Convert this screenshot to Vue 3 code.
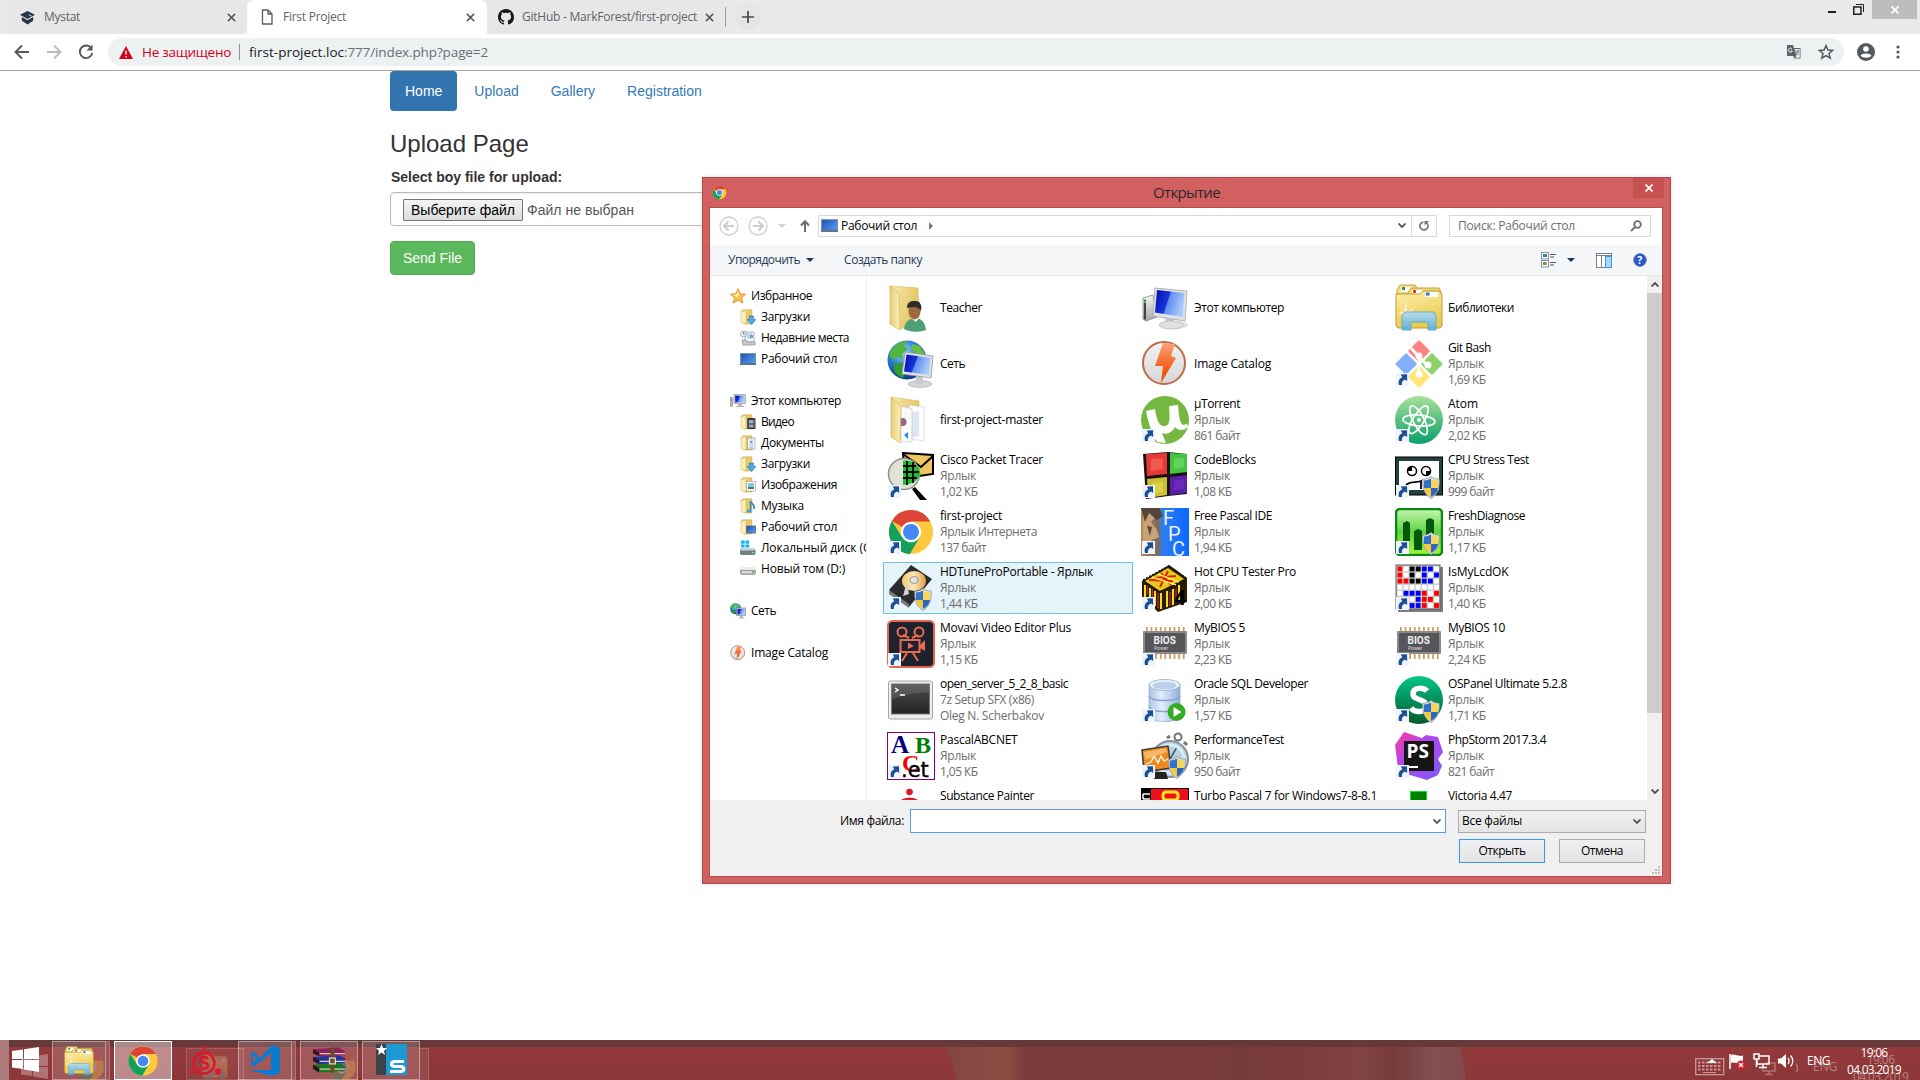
<script setup>
const fit = (el, width) => {
  const natural = el.getBoundingClientRect().width
  const count = el.textContent.trim().length
  el.style.letterSpacing = `${(width - natural) / count}px`
}
const vFit = {
  mounted(el, { value }) {
    if (value) fit(el, value)
  },
}

const places = [
  { t: 'Избранное', i: 's-star', w: 61, root: true },
  { t: 'Загрузки', i: 's-down', w: 49 },
  { t: 'Недавние места', i: 's-recent', w: 88 },
  { t: 'Рабочий стол', i: 's-desk', w: 76 },
  { gap: true },
  { t: 'Этот компьютер', i: 's-pc', w: 90, root: true },
  { t: 'Видео', i: 's-video', w: 33 },
  { t: 'Документы', i: 's-docs', w: 63 },
  { t: 'Загрузки', i: 's-down', w: 49 },
  { t: 'Изображения', i: 's-pics', w: 76 },
  { t: 'Музыка', i: 's-music', w: 43 },
  { t: 'Рабочий стол', i: 's-fdesk', w: 76 },
  { t: 'Локальный диск (C:)', i: 's-diskc', w: 116 },
  { t: 'Новый том (D:)', i: 's-disk', w: 84 },
  { gap: true },
  { t: 'Сеть', i: 's-net', w: 25, root: true },
  { gap: true },
  { t: 'Image Catalog', i: 'catalog', w: 77, root: true },
]

const L = ['Ярлык', 36]
const files = [
  { n: 'Teacher', w: 42, i: 'teacher' },
  { n: 'Этот компьютер', w: 90, i: 'pc' },
  { n: 'Библиотеки', w: 66, i: 'libs' },
  { n: 'Сеть', w: 25, i: 'net' },
  { n: 'Image Catalog', w: 77, i: 'catalog' },
  { n: 'Git Bash', w: 43, i: 'git', s: 1, d: [L, ['1,69 КБ', 37.5]] },
  { n: 'first-project-master', w: 103, i: 'fpm' },
  { n: 'µTorrent', w: 46, i: 'utorrent', s: 1, d: [L, ['861 байт', 46]] },
  { n: 'Atom', w: 30, i: 'atom', s: 1, d: [L, ['2,02 КБ', 37.5]] },
  { n: 'Cisco Packet Tracer', w: 103, i: 'cisco', s: 1, d: [L, ['1,02 КБ', 37.5]] },
  { n: 'CodeBlocks', w: 62, i: 'blocks', s: 1, d: [L, ['1,08 КБ', 37.5]] },
  { n: 'CPU Stress Test', w: 81, i: 'stress', s: 1, a: 1, d: [L, ['999 байт', 46]] },
  { n: 'first-project', w: 62, i: 'chrome', s: 1, d: [['Ярлык Интернета', 97], ['137 байт', 46]] },
  { n: 'Free Pascal IDE', w: 78, i: 'fpc', s: 1, d: [L, ['1,94 КБ', 37.5]] },
  { n: 'FreshDiagnose', w: 77, i: 'fresh', s: 1, a: 1, d: [L, ['1,17 КБ', 37.5]] },
  { n: 'HDTuneProPortable - Ярлык', w: 153, i: 'hdtune', s: 1, a: 1, hover: true, d: [L, ['1,44 КБ', 37.5]] },
  { n: 'Hot CPU Tester Pro', w: 102, i: 'hotcpu', s: 1, d: [L, ['2,00 КБ', 37.5]] },
  { n: 'IsMyLcdOK', w: 60.5, i: 'lcd', s: 1, d: [L, ['1,40 КБ', 37.5]] },
  { n: 'Movavi Video Editor Plus', w: 131, i: 'movavi', s: 1, d: [L, ['1,15 КБ', 37.5]] },
  { n: 'MyBIOS 5', w: 51, i: 'bios', s: 1, d: [L, ['2,23 КБ', 37.5]] },
  { n: 'MyBIOS 10', w: 57, i: 'bios', s: 1, d: [L, ['2,24 КБ', 37.5]] },
  { n: 'open_server_5_2_8_basic', w: 128, i: 'term', d: [['7z Setup SFX (x86)', 94], ['Oleg N. Scherbakov', 104]] },
  { n: 'Oracle SQL Developer', w: 114, i: 'oracle', s: 1, d: [L, ['1,57 КБ', 37.5]] },
  { n: 'OSPanel Ultimate 5.2.8', w: 119, i: 'ospanel', s: 1, a: 1, d: [L, ['1,71 КБ', 37.5]] },
  { n: 'PascalABCNET', w: 77.5, i: 'pascal', s: 1, d: [L, ['1,05 КБ', 37.5]] },
  { n: 'PerformanceTest', w: 90, i: 'perf', s: 1, a: 1, d: [L, ['950 байт', 46]] },
  { n: 'PhpStorm 2017.3.4', w: 98, i: 'storm', s: 1, d: [L, ['821 байт', 46]] },
  { n: 'Substance Painter', w: 94, i: 'substance', tall: true },
  { n: 'Turbo Pascal 7 for Windows7-8-8.1', w: 183, i: 'turbo', tall: true },
  { n: 'Victoria 4.47', w: 64, i: 'victoria', tall: true },
]

// Lettering drawn over the tile artwork: text, x, baseline, size, colour, family class
const lettering = {
  fpc: [['F', 22, 17, 20, '#e8f2ff', 'sans'], ['P', 27, 33, 20, '#e8f2ff', 'sans'], ['C', 31, 48, 20, '#e8f2ff', 'sans']],
  hotcpu: [['4', 33, 41, 21, '#000', 'bold']],
  bios: [['BIOS', 12.5, 24, 10, '#f0f0f0', 'bold'], ['Power', 13, 30, 5, '#ddd', 'sans']],
  storm: [['PS', 11.5, 26, 19, '#fff', 'open']],
  pascal: [['A', 4, 21, 25, '#000080', 'serif'], ['B', 28, 21, 24, '#008000', 'serif'], ['C', 15, 39, 24, '#f00', 'serif'], ['.et', 14, 45, 21, '#000', 'deja']],
}

const lcdRows = ['r.kkbb.', 'r.k.b.b', 'rrkkbb.', '.......', '.bbbr.r', '...brr.', '..bbr.r']
const lcdColor = { r: '#f00', k: '#000', b: '#00f', '.': '#fff' }
const pins = [0, 1, 2, 3, 4, 5, 6, 7, 8]
</script>

<template>
  <div class="screen">
    <svg class="sprite" width="0" height="0" aria-hidden="true">
      <defs>
        <linearGradient id="gFold" x1="0" x2="1" y2="0.4"><stop offset="0" stop-color="#f9ebae" /><stop offset="1" stop-color="#e2c35f" /></linearGradient>
        <linearGradient id="gFlap" x1="0" x2="1"><stop offset="0" stop-color="#e7cd78" /><stop offset="1" stop-color="#fcf2bd" /></linearGradient>
        <linearGradient id="gBlue" x1="0" x2="1" y2="0.3"><stop offset="0" stop-color="#0a0ab4" /><stop offset="0.5" stop-color="#1638d8" /><stop offset="0.52" stop-color="#5f8cf0" /><stop offset="1" stop-color="#a9c9fb" /></linearGradient>
        <linearGradient id="gDesk" x1="0" x2="1" y2="1"><stop offset="0" stop-color="#1c4fb4" /><stop offset="1" stop-color="#5ea3f5" /></linearGradient>
        <linearGradient id="gMetal" x2="0" y2="1"><stop offset="0" stop-color="#f4f4f4" /><stop offset="1" stop-color="#a5a8aa" /></linearGradient>
        <radialGradient id="gGlobe" cx="0.4" cy="0.3" r="0.7"><stop offset="0" stop-color="#9fd9ff" /><stop offset="0.5" stop-color="#2d7fd0" /><stop offset="1" stop-color="#0b3b86" /></radialGradient>
        <linearGradient id="gBolt" x2="0" y2="1"><stop offset="0" stop-color="#f9a378" /><stop offset="0.6" stop-color="#f4601c" /><stop offset="1" stop-color="#ee4b00" /></linearGradient>
        <linearGradient id="gAtom" x2="0" y2="1"><stop offset="0" stop-color="#a9e09b" /><stop offset="1" stop-color="#0aa06a" /></linearGradient>
        <linearGradient id="gOs" x2="0" y2="1"><stop offset="0" stop-color="#05c68a" /><stop offset="1" stop-color="#055a2b" /></linearGradient>
        <linearGradient id="gDb" x1="0" x2="1"><stop offset="0" stop-color="#a9c4e4" /><stop offset="0.4" stop-color="#e3eefb" /><stop offset="1" stop-color="#8fb0d8" /></linearGradient>
        <linearGradient id="gStorm" x1="0" x2="1" y2="1"><stop offset="0" stop-color="#ff3c93" /><stop offset="0.4" stop-color="#b345f1" /><stop offset="1" stop-color="#7b5cf5" /></linearGradient>
        <linearGradient id="gFresh" x2="0" y2="1"><stop offset="0" stop-color="#c6f5b4" /><stop offset="0.5" stop-color="#5ed43e" /><stop offset="1" stop-color="#a6f53c" /></linearGradient>
        <linearGradient id="gLibf" x2="0.3" y2="1"><stop offset="0" stop-color="#fff0ab" /><stop offset="1" stop-color="#e9c94f" /></linearGradient>
        <linearGradient id="gLibb" x2="0" y2="1"><stop offset="0" stop-color="#b5dcef" /><stop offset="1" stop-color="#55ade0" /></linearGradient>
        <linearGradient id="gTerm" x2="0" y2="1"><stop offset="0" stop-color="#4c4c4c" /><stop offset="1" stop-color="#242424" /></linearGradient>
        <linearGradient id="gGold" x1="0" x2="1"><stop offset="0" stop-color="#f5c96c" /><stop offset="0.5" stop-color="#fbe7b6" /><stop offset="1" stop-color="#e59b47" /></linearGradient>
        <linearGradient id="gFpc" x1="0" x2="1"><stop offset="0" stop-color="#b98a52" /><stop offset="0.35" stop-color="#7f6a58" /><stop offset="0.45" stop-color="#2d7ef2" /><stop offset="1" stop-color="#0a68ff" /></linearGradient>
      </defs>

      <symbol id="link" viewBox="0 0 13 13">
        <rect width="13" height="13" fill="#eef4fb" />
        <path d="M3 12C2 8 3.400 5 6.400 4.400L4.800 1.600 11 1.200 11.200 8 9 6.400C6.400 7.400 5.400 9.400 6 12Z" fill="#1c4e94" />
      </symbol>
      <symbol id="shield" viewBox="0 0 18 23">
        <path d="M9 .5C6.500 2.600 3.500 3.200.8 3.200.3 12 2.500 18.500 9 22.500 15.500 18.500 17.700 12 17.200 3.200 14.500 3.200 11.500 2.600 9 .5Z" fill="#dfe2e4" stroke="#8d9396" stroke-width=".8" />
        <path d="M9 2.500V12H2C1.800 9 1.800 6 2 4.500 4.500 4.400 7 3.800 9 2.500Z" fill="#2f72cc" />
        <path d="M9 2.500V12H16C16.200 9 16.200 6 16 4.500 13.500 4.400 11 3.800 9 2.500Z" fill="#f6d65a" />
        <path d="M9 21V12H2C2.800 16 5 19 9 21Z" fill="#f5c83c" />
        <path d="M9 21V12H16C15.200 16 13 19 9 21Z" fill="#2a67bd" />
      </symbol>
      <symbol id="chrome" viewBox="0 0 48 48">
        <circle cx="24" cy="24" r="22" fill="#fdc93a" />
        <path d="M24 24 4.900 13A22 22 0 0 1 43.200 13.500H24Z" fill="#db4437" />
        <path d="M4.950 13A22 22 0 0 0 22.800 46L33 29 24 24 15 29Z" fill="#12a05c" />
        <circle cx="24" cy="24" r="10.300" fill="#fff" />
        <circle cx="24" cy="24" r="8" fill="#4688f1" />
      </symbol>
      <symbol id="globe" viewBox="0 0 40 40">
        <circle cx="20" cy="20" r="19.500" fill="url(#gGlobe)" />
        <path d="M5 9C9 4 14 1 20 1L17 6 21 9 15 14 16 19 10 17 6 20 2 15Z" fill="#4fb53c" />
        <path d="M8 23 16 23 20 29 16 38C10 36 7 32 7 28Z" fill="#2f9c2f" />
        <path d="M25 4 33 6 38 14 35 18 28 13 24 9Z" fill="#67bd45" />
      </symbol>
      <symbol id="teacher" viewBox="0 0 48 48">
        <path d="M3 2 31 4 32 40 12 45Z" fill="url(#gFold)" stroke="#d6b95e" stroke-width=".6" />
        <path d="M3 2 12 10 13 46 3 40Z" fill="url(#gFlap)" stroke="#cfae4e" stroke-width=".6" />
        <path d="M17 45C18 37 22 35 28 34 34 34 38 38 39 46 31 49 23 48 17 45Z" fill="#4f9f77" />
        <path d="M24 34 29 38 32 34Z" fill="#fff" />
        <ellipse cx="27.500" cy="27" rx="6" ry="8.500" fill="#9c6a3e" />
        <path d="M20 24C20 17 25 17 28 17 34 17 35 22 34 27 32 23 27 22 20 24Z" fill="#2e2c2a" />
      </symbol>
      <symbol id="fpm" viewBox="0 0 48 48">
        <path d="M4 1 32 5V40L14 44Z" fill="url(#gFold)" stroke="#d6b95e" stroke-width=".6" />
        <path d="M22 9 37 11V45L22 43Z" fill="#fdfdfd" stroke="#c9c9c9" stroke-width=".6" />
        <path d="M24 16 32 15V40L24 42Z" fill="#dfe6f1" />
        <path d="M14 10 25 13V46L14 46Z" fill="#fafafa" stroke="#c2c2c2" stroke-width=".6" />
        <circle cx="15.500" cy="26" r="4" fill="#92648f" /><path d="M17 39 21 36V43Z" fill="#2093de" />
        <path d="M4 1 14 11 13 47 4 41Z" fill="url(#gFlap)" stroke="#cfae4e" stroke-width=".6" />
      </symbol>
      <symbol id="pc" viewBox="0 0 48 48">
        <ellipse cx="34" cy="41" rx="13" ry="4" fill="#d5d5d5" opacity=".7" />
        <path d="M2 14 12 11 16 33 5 37 2 35Z" fill="url(#gMetal)" stroke="#777" stroke-width=".7" />
        <path d="M3 16 5 15.500V36L3 35Z" fill="#444" /><circle cx="4" cy="18" r="1" fill="#3f3" />
        <path d="M24 34 33 35 33 41H25Z" fill="#c8cbcd" /><ellipse cx="30" cy="41" rx="12" ry="4" fill="#dee0e2" stroke="#b0b3b5" stroke-width=".6" />
        <path d="M14 4 46 7 44 37 12 32Z" fill="#e0e2e4" stroke="#a1a4a6" stroke-width=".8" />
        <path d="M16 6 43.500 9 41.500 33 14 28.500Z" fill="url(#gBlue)" />
      </symbol>
      <symbol id="net" viewBox="0 0 48 48">
        <use href="#globe" x="0" y="0" width="40" height="40" />
        <ellipse cx="33" cy="44" rx="12" ry="3.500" fill="#d3d6d8" stroke="#a9acae" stroke-width=".6" />
        <path d="M29 36h7v8h-7z" fill="#c8cbcd" />
        <path d="M18 12 46 16 44 38 15 34Z" fill="#e0e2e4" stroke="#94989b" stroke-width=".8" />
        <path d="M19.500 14.500 43.500 18 42 35 17 31.500Z" fill="url(#gBlue)" />
      </symbol>
      <symbol id="catalog" viewBox="0 0 48 48">
        <circle cx="23" cy="23" r="21.500" fill="url(#gMetal)" /><circle cx="23" cy="23" r="21.500" fill="#f3f3f3" opacity=".6" />
        <circle cx="23" cy="23" r="21" fill="none" stroke="#bd6a45" stroke-width="2" />
        <path d="M22 3 34 4 30 16 35 18 20 43 22 26 14 26Z" fill="url(#gBolt)" />
      </symbol>
      <symbol id="libs" viewBox="0 0 48 48">
        <path d="M2 6 5 1H20L22 4V10H2Z" fill="#f2dd8b" stroke="#c6a33c" /><rect x="6" y="3" width="10" height="5" fill="#fff" /><rect x="7" y="3" width="3" height="3" fill="#2b9c3f" />
        <path d="M13 8 16 4H44L46 8V14H13Z" fill="#eed57d" stroke="#c6a33c" /><rect x="17" y="6" width="11" height="5" fill="#fff" /><rect x="18" y="6" width="3" height="3" fill="#e23c1c" />
        <path d="M1 10H25L28 7H44L47 11V42L45 44H3L1 42Z" fill="url(#gLibf)" stroke="#c09c35" />
        <rect x="30" y="8" width="13" height="5" fill="#fff" /><rect x="31" y="8.500" width="3.500" height="3" fill="#2876c9" />
        <path d="M11 14 12 28 22 22 13 30 22 36 12 33 7 42 9 31 2 28 9 28Z" fill="#fff" opacity=".6" />
        <path d="M10 28H39L41 32V46H33V38H16V46H7V32Z" fill="url(#gLibb)" stroke="#5ba7ce" opacity=".92" />
      </symbol>
      <symbol id="git" viewBox="0 0 48 48">
        <g transform="rotate(45 24 24)">
          <rect x="7" y="7" width="15.800" height="15.800" rx="1.500" fill="#ff8181" /><rect x="25.200" y="7" width="15.800" height="15.800" rx="1.500" fill="#8bd367" />
          <rect x="7" y="25.200" width="15.800" height="15.800" rx="1.500" fill="#82aefc" /><rect x="25.200" y="25.200" width="15.800" height="15.800" rx="1.500" fill="#ffe675" />
        </g>
        <path d="M16 8 24 17V34M24 17 32 25" fill="none" stroke="#fff" stroke-width="3" /><circle cx="24" cy="16" r="3.500" fill="#fff" /><circle cx="24" cy="34" r="3.500" fill="#fff" /><circle cx="33" cy="25" r="3.500" fill="#fff" />
      </symbol>
      <symbol id="utorrent" viewBox="0 0 48 48">
        <circle cx="24" cy="24" r="24" fill="#76b83f" />
        <path d="M5 15 14 13C16 26 19 31 24 30 29 29 29 24 28 10L37 9C38 22 39 27 42 29L46 28 47 31C43 35 37 35 34 31 31 37 25 39 21 37L25 47 16 46C10 36 7 25 5 15Z" fill="#fff" />
      </symbol>
      <symbol id="atom" viewBox="0 0 48 48">
        <circle cx="24" cy="24" r="24" fill="url(#gAtom)" />
        <g fill="none" stroke="#fff" stroke-width="1.700"><ellipse cx="24" cy="24.500" rx="16" ry="5.500" transform="rotate(5 24 24)" /><ellipse cx="24" cy="24.500" rx="16" ry="5.500" transform="rotate(63 24 24)" /><ellipse cx="24" cy="24.500" rx="16" ry="5.500" transform="rotate(122 24 24)" /></g><circle cx="24" cy="24" r="2" fill="#fff" />
      </symbol>
      <symbol id="cisco" viewBox="0 0 48 48">
        <path d="M16 1 46 3 46 22 18 26Z" fill="#edc561" stroke="#000" stroke-width="2" /><path d="M16 2 34 15 46 4" fill="none" stroke="#000" stroke-width="2" />
        <circle cx="17" cy="22" r="15.500" fill="#e1e1da" stroke="#8f8f8c" stroke-width="1.500" />
        <path d="M16 9C24 7 32 13 33 22 32 28 26 32 16 33Z" fill="#18c32c" /><path d="M16 14H29M16 20H32M16 26H30M20 9V33M26 10V31" stroke="#000" stroke-width="1.800" />
        <path d="M25 37 28 35 40 48H33Z" fill="#000" />
      </symbol>
      <symbol id="blocks" viewBox="0 0 48 48">
        <path d="M2 2 27 0 46 2V42L27 44 5 47Z" fill="#1b1016" />
        <path d="M5 2 26 1V22L6 24Z" fill="#e03a32" /><path d="M10 7 22 6V17L10 19Z" fill="#f05a50" /><path d="M29 1 46 2V20L29 22Z" fill="#43c341" /><path d="M33 6 43 6V15L33 17Z" fill="#60d458" />
        <path d="M6 27 26 25V43L7 46Z" fill="#c9bf33" /><path d="M11 31 22 30V40L11 42Z" fill="#dcd044" /><path d="M29 25 46 23V41L29 43Z" fill="#5a20a6" /><path d="M33 29 43 27V37L33 38Z" fill="#6a2cb8" />
      </symbol>
      <symbol id="stress" viewBox="0 0 48 48">
        <rect x=".5" y="5" width="47" height="38" fill="#23413f" stroke="#000" /><rect x="4" y="9" width="40" height="29" fill="#fff" />
        <circle cx="17" cy="19" r="4.500" fill="#fff" stroke="#000" stroke-width="1.500" /><path d="M17 14A5 5 0 0 0 12 19H17Z" /><circle cx="31" cy="19" r="4.500" fill="#fff" stroke="#000" stroke-width="1.500" /><path d="M31 19V24A5 5 0 0 0 36 19Z" />
        <path d="M11 33C15 29 20 31 26 29V37" fill="none" stroke="#000" stroke-width="1.800" />
      </symbol>
      <symbol id="fpc" viewBox="0 0 48 48">
        <rect width="48" height="48" fill="url(#gFpc)" />
        <path d="M2 6 10 2 15 8 10 14 16 22 18 29 11 32 10 40 2 42Z" fill="#c9a378" /><path d="M0 0 18 0 22 8 16 12 8 5 4 14Z" fill="#54443a" /><path d="M6 18 11 19 9 28Z" fill="#5d4636" />
      </symbol>
      <symbol id="fresh" viewBox="0 0 48 48">
        <rect x="1" y="1" width="46" height="46" rx="4" fill="url(#gFresh)" stroke="#088c12" stroke-width="2.500" />
        <path d="M8 15 12 13 15 15V33H8ZM19 23 23 21 27 23V42H19ZM31 12 35 10 39 12V30H31Z" fill="#04580a" />
      </symbol>
      <symbol id="hdtune" viewBox="0 0 48 48">
        <path d="M24 1 45 15 22 43 2 26Z" fill="#2b2b2d" /><path d="M2 26 22 40V44L2 30Z" fill="#77787a" />
        <ellipse cx="27" cy="17" rx="12" ry="10" fill="url(#gGold)" /><ellipse cx="27" cy="16" rx="4" ry="3.500" fill="#e4e4e4" stroke="#999" /><path d="M20 17 22 30 16 32Z" fill="#d3d3d3" />
      </symbol>
      <symbol id="hotcpu" viewBox="0 0 48 48">
        <path d="M1 17 28 1 46 14V38L17 48 1 33Z" fill="#2c1c05" />
        <path d="M4 17 27 4 43 15 19 27Z" fill="#e8c91c" /><path d="M8 16 32 17M13 14 35 12M20 9 30 21M27 7 19 23" stroke="#e01f10" stroke-width="2" /><path d="M11 13 35 21M17 10 38 18" stroke="#fff14c" stroke-width="1.500" />
        <g fill="none"><path d="M2 16 28 2 45 14M2 17 18 28 45 17" stroke="#1a1204" stroke-width="1.500" stroke-dasharray="2 1.500" /></g>
        <path d="M4 21V33M9 24V37M14 27V42M20 29V45M26 27V43M32 25V41M38 21V38" stroke="#f2e01e" stroke-width="2" /><path d="M6.500 22V30M11.500 25V36M17 29V44M29 28V42M35 25V38" stroke="#d6261b" stroke-width="1.200" />
      </symbol>
      <symbol id="lcd" viewBox="0 0 48 48">
        <rect x="3" y="3" width="45" height="45" fill="#7c7c7c" /><rect x="1" y="1" width="44" height="44" fill="#c9c9c9" stroke="#5d5d5d" />
        <g v-for="(row, y) in lcdRows" :key="y"><rect v-for="(c, x) in row" :key="x" :x="2.5 + x * 6.1" :y="2.5 + y * 6.1" width="4.800" height="4.800" :fill="lcdColor[c]" /></g>
      </symbol>
      <symbol id="movavi" viewBox="0 0 48 48">
        <rect x="1" y="1" width="46" height="46" rx="4.500" fill="#1d222e" stroke="#e5654f" stroke-width="2" />
        <g fill="none" stroke="#ea6a52" stroke-width="2"><circle cx="15" cy="12" r="4.500" /><circle cx="32" cy="12" r="4.500" /><path d="M13.500 20H32.500V32H13.500ZM22 18 16 15M25 18 31 15M20 33 15 41M26 33 31 41" /></g><path d="M33 25 38 20V31L33 28ZM21 22.500 27 26 21 29Z" fill="#ea6a52" />
      </symbol>
      <symbol id="bios" viewBox="0 0 48 48">
        <g fill="#cf9f62"><g v-for="p in pins" :key="p"><rect :x="5 + p * 4.6" y="7" width="1.800" height="6" /><rect :x="5 + p * 4.6" y="33" width="1.800" height="6" /></g></g>
        <rect x="2" y="11" width="44" height="23" rx="1" fill="#8a8a8a" /><rect x="4" y="13" width="40" height="19" fill="#55565a" />
      </symbol>
      <symbol id="term" viewBox="0 0 48 48">
        <rect x="1.500" y="5" width="44" height="38" rx="2" fill="#ededed" stroke="#a6a6a6" /><rect x="4.500" y="8" width="38" height="30" fill="url(#gTerm)" stroke="#777" /><path d="M5 9H42V16C28 17 16 19 5 23Z" fill="#fff" opacity=".12" />
        <path d="M8 12 11 14 8 16M13 19H18" fill="none" stroke="#fff" stroke-width="1.400" />
      </symbol>
      <symbol id="oracle" viewBox="0 0 48 48">
        <path d="M8 8V41C8 47 39 47 39 41V8Z" fill="url(#gDb)" stroke="#8ba9d0" stroke-width=".7" /><path d="M8 20C10 26 37 26 39 20M8 31C10 37 37 37 39 31" fill="none" stroke="#86a5cf" stroke-width="1.500" /><ellipse cx="23.500" cy="9" rx="15.500" ry="5.500" fill="#edf4fc" stroke="#9db9dc" /><ellipse cx="23.500" cy="9.500" rx="12" ry="3.800" fill="#b9cfea" />
        <circle cx="35.500" cy="36" r="9" fill="#33ab22" /><path d="M32.500 31 40.500 36 32.500 41Z" fill="#fff" />
      </symbol>
      <symbol id="ospanel" viewBox="0 0 48 48">
        <circle cx="24" cy="24" r="24" fill="url(#gOs)" /><path d="M32 15C29 11.500 18 10.500 18 18 18 25 31 22 31 30 31 37 20 37 16 32" fill="none" stroke="#fff" stroke-width="5.500" />
      </symbol>
      <symbol id="pascal" viewBox="0 0 48 48"><rect x=".5" y=".5" width="47" height="47" fill="#fff" stroke="#800080" /></symbol>
      <symbol id="perf" viewBox="0 0 48 48">
        <circle cx="37" cy="5" r="3.500" fill="none" stroke="#70787c" stroke-width="2" /><path d="M26 6 29 4M43 10 46 13" stroke="#70787c" stroke-width="3" />
        <circle cx="29" cy="27" r="18" fill="#b7d3e6" stroke="#8a9297" stroke-width="2" /><path d="M29 27 36 15" stroke="#456" stroke-width="1.500" /><circle cx="29" cy="27" r="14" fill="none" stroke="#dcecf6" stroke-width="3" />
        <path d="M1 18 27 14 30 36 3 40Z" fill="#f08a1d" stroke="#3a3a3a" stroke-width="1.500" /><path d="M5 32 10 30 13 24 17 31 20 24 23 29 27 27" fill="none" stroke="#fff" stroke-width="1.300" /><path d="M3 20 25 16 26 20 4 28Z" fill="#fbc078" opacity=".8" />
        <path d="M14 40H25L27 47H13Z" fill="#222" />
      </symbol>
      <symbol id="storm" viewBox="0 0 48 48">
        <path d="M9 0 27 6 31 3 43 5 48 20 43 27 47 34 43 43 32 48 15 43 3 36 0 13Z" fill="url(#gStorm)" /><rect x="9" y="9" width="30" height="30" fill="#151515" /><rect x="12" y="34" width="11" height="2" fill="#fff" />
      </symbol>
      <symbol id="substance" viewBox="0 0 48 48">
        <circle cx="22.500" cy="4" r="3.300" fill="#dc1a2c" /><circle cx="22.500" cy="26" r="14" fill="none" stroke="#dc1a2c" stroke-width="5" />
      </symbol>
      <symbol id="turbo" viewBox="0 0 48 48">
        <rect width="48" height="48" fill="#000" /><rect x="10" y="1" width="37" height="47" fill="#f00f1a" /><rect x="22" y="4" width="15" height="8" rx="3" fill="none" stroke="#ffe81c" stroke-width="3" />
        <path d="M2 6H9M2 11H9M2 6V11" stroke="#fff" stroke-width="1.500" fill="none" /><path d="M13 3v9M17 5v6M43 3v9M40 5v5" stroke="#a0132c" stroke-dasharray="1 2" />
      </symbol>
      <symbol id="victoria" viewBox="0 0 48 48"><rect x="15.500" y="3.500" width="16" height="30" fill="#007e00" stroke="#00ed10" /></symbol>

      <symbol id="s-folder" viewBox="0 0 16 16"><path d="M1 2.500 3 .8H12V15H4Z" fill="#e7c969" stroke="#c9a94a" stroke-width=".5" /><path d="M1 2.500 6 1.500V15L1 13.500Z" fill="#fbefb8" stroke="#d0b45c" stroke-width=".5" /></symbol>
      <symbol id="s-down" viewBox="0 0 16 16"><use href="#s-folder" width="16" height="16" /><path d="M9.500 7H13.500V10.500H16L11.500 15.500 7 10.500H9.500Z" fill="#49a9e6" stroke="#1e72b5" stroke-width=".6" /></symbol>
      <symbol id="s-video" viewBox="0 0 16 16"><use href="#s-folder" width="16" height="16" /><rect x="7" y="4" width="8.500" height="11" fill="#333" /><path d="M9 6h4.500v3.500H9zM9 10.500h4.500v3H9z" fill="#8fb5d6" /><path d="M7.800 4.500V15M14.800 4.500V15" stroke="#ddd" stroke-width=".7" stroke-dasharray="1 1" /></symbol>
      <symbol id="s-docs" viewBox="0 0 16 16"><use href="#s-folder" width="16" height="16" /><rect x="7.500" y="3" width="7.500" height="11" fill="#fff" stroke="#888" stroke-width=".6" /><path d="M9 5h4.500M9 9h4.500M9 11h4.500M9 12.800h4.500" stroke="#8c9eb2" stroke-width=".7" /><rect x="10" y="6" width="2.500" height="2" fill="#5aa4df" /></symbol>
      <symbol id="s-pics" viewBox="0 0 16 16"><use href="#s-folder" width="16" height="16" /><rect x="6.500" y="4.500" width="9" height="9.500" fill="#fff" stroke="#999" stroke-width=".6" /><path d="M8 6h6v6H8z" fill="#8fc3e4" /><path d="M8 10h6v2H8z" fill="#4d7d58" /></symbol>
      <symbol id="s-music" viewBox="0 0 16 16"><use href="#s-folder" width="16" height="16" /><path d="M10.500 3C11 6 15.500 6 14 11" fill="none" stroke="#2b87cb" stroke-width="1.500" /><path d="M10.500 3V13" stroke="#2b87cb" stroke-width="1.500" /><ellipse cx="9" cy="13" rx="2.500" ry="1.800" fill="#46a4e4" /></symbol>
      <symbol id="s-desk" viewBox="0 0 16 16"><rect x=".5" y="2.500" width="15" height="11" fill="url(#gDesk)" stroke="#7d93a8" /><path d="M0 12h16v2H0z" fill="#5e7288" /></symbol>
      <symbol id="s-fdesk" viewBox="0 0 16 16"><use href="#s-folder" width="16" height="16" /><rect x="6.500" y="7" width="9" height="7" fill="url(#gDesk)" stroke="#54677c" stroke-width=".8" /></symbol>
      <symbol id="s-star" viewBox="0 0 16 16"><path d="M8 .8 10.200 5.700 15.500 6.200 11.500 9.700 12.900 15 8 12.200 3.100 15 4.500 9.700.5 6.200 5.800 5.700Z" fill="#fcc14f" stroke="#e08a24" stroke-width=".9" /><path d="M8 3 9.200 6.700 7 9 3 7.200 6.500 6.500Z" fill="#fff2b5" /></symbol>
      <symbol id="s-recent" viewBox="0 0 16 16"><path d="M5 2h9v10H5z" fill="#f5f8fa" stroke="#8d979f" stroke-width=".7" /><path d="M7 4h5M7 6h3M7 8h5" stroke="#81a3c4" stroke-width=".8" /><path d="M10 5h3v3h-3z" fill="#6aa7da" /><path d="M2 10h4l1 2h8v3H3Z" fill="#c6cbcf" stroke="#858c92" stroke-width=".7" /><circle cx="3.500" cy="4" r="3" fill="#e9f1f7" stroke="#8196a8" stroke-width=".7" /><path d="M3.500 2v2H5" stroke="#456" fill="none" stroke-width=".7" /></symbol>
      <symbol id="s-pc" viewBox="0 0 16 16"><rect x=".5" y="4.500" width="2" height="9" fill="#b6babd" stroke="#777" stroke-width=".5" /><rect x="1" y="6" width="1" height="2" fill="#2d2" /><rect x="4" y="1.500" width="11.500" height="9" fill="#ccd0d3" stroke="#8c9296" stroke-width=".6" /><rect x="5.200" y="2.700" width="9" height="6.600" fill="url(#gBlue)" /><path d="M8 11h4v2h2v1H6v-1h2z" fill="#b3b8bc" /></symbol>
      <symbol id="s-net" viewBox="0 0 16 16"><use href="#globe" x="0" y="0" width="11.500" height="11.500" /><rect x="6.500" y="5" width="9" height="7.500" fill="#ccd0d3" stroke="#777" stroke-width=".6" /><rect x="7.500" y="6" width="7" height="5.500" fill="url(#gBlue)" /><path d="M10 12.500h3v2h1.500v1H8.500v-1H10z" fill="#b3b8bc" /></symbol>
      <symbol id="s-disk" viewBox="0 0 16 16"><path d="M2.500 6H13.500L16 9V12.500L14.500 14H1.500L0 12.500V9Z" fill="#b4b8bb" /><path d="M2.500 6H13.500L15.500 9H.5Z" fill="#e9ebec" /><rect x="1" y="9.500" width="14" height="3.500" rx="1" fill="#d9dcde" stroke="#7e8386" stroke-width=".7" /><rect x="12" y="10.500" width="2" height="1.200" fill="#2c8f3d" /></symbol>
      <symbol id="s-diskc" viewBox="0 0 16 16"><path d="M2 8H13.500L15.500 10V13.500L14.500 15H1L0 13.500V10Z" fill="#6f7f86" /><path d="M2 8H13.500L15.500 10.500H.3Z" fill="#c8d3d8" /><rect x="12" y="12" width="2" height="1.200" fill="#5ef070" /><path d="M1 .5h3.700v3.200H1zM5.500.5h3.700v3.200H5.500zM1 4.500h3.700v3H1zM5.500 4.500h3.700v3H5.500z" fill="#19b3ee" /></symbol>
      <symbol id="start" viewBox="0 0 28 26"><path d="M0 4 11 2.500V12H0ZM12 2.300 27 0V12H12ZM0 13H11V22L0 20.500ZM12 13H27V25L12 22.500Z" /></symbol>
    </svg>

    <header class="tabstrip">
      <div class="tab first">
        <svg class="fav" viewBox="0 0 16 16"><path d="M8 1 16 5 8 9.500 0 5Z" fill="#26344c" /><path d="M2 7.500 8 11 14 7.500V11.500L8 15.500 2 11.500Z" fill="#26344c" /><path d="M12.500 6.500 9 5" stroke="#cfd6e0" /></svg>
        <span class="cap"><span v-fit="36">Mystat</span></span>
        <svg class="x" viewBox="0 0 10 10"><path d="M1 1 9 9M9 1 1 9" /></svg>
      </div>
      <div class="tab active">
        <svg class="fav" viewBox="0 0 16 16"><path d="M3.500 1H9L13 5V15H3.500ZM9 1V5H13" fill="none" stroke="#5a5d61" stroke-width="1.300" /></svg>
        <span class="cap"><span v-fit="63">First Project</span></span>
        <svg class="x" viewBox="0 0 10 10"><path d="M1 1 9 9M9 1 1 9" /></svg>
      </div>
      <div class="tab third">
        <svg class="fav gh" viewBox="0 0 16 16"><path d="M8 0C3.580 0 0 3.580 0 8c0 3.540 2.290 6.530 5.470 7.590.4.070.55-.17.55-.38 0-.19-.01-.82-.01-1.490-2.010.37-2.530-.49-2.690-.94-.09-.23-.48-.94-.82-1.130-.28-.15-.68-.52-.01-.53.63-.01 1.080.58 1.230.82.72 1.210 1.870.87 2.330.66.07-.52.28-.87.51-1.070-1.780-.2-3.640-.89-3.640-3.950 0-.87.31-1.590.82-2.150-.08-.2-.36-1.020.08-2.120 0 0 .67-.21 2.200.82.64-.18 1.320-.27 2-.27s1.360.09 2 .27c1.530-1.040 2.200-.82 2.200-.82.44 1.100.16 1.920.08 2.120.51.56.82 1.270.82 2.150 0 3.070-1.870 3.750-3.650 3.950.29.25.54.73.54 1.480 0 1.070-.01 1.930-.01 2.200 0 .21.15.46.55.38A8.010 8.010 0 0 0 16 8c0-4.420-3.580-8-8-8Z" fill="#17191c" /></svg>
        <span class="cap"><span v-fit="175">GitHub - MarkForest/first-project</span></span>
        <svg class="x" viewBox="0 0 10 10"><path d="M1 1 9 9M9 1 1 9" /></svg>
      </div>
      <span class="tabsep"></span>
      <span class="plus"><svg viewBox="0 0 12 12"><path d="M6 0V12M0 6H12" /></svg></span>
      <div class="wctl">
        <i class="min"></i>
        <svg class="restore" viewBox="0 0 11 11"><path d="M3 .5H10.500V8" fill="none" stroke="#222" /><path d="M.75 3H8V10.250H.75Z" fill="none" stroke="#222" stroke-width="1.500" /></svg>
        <span class="wclose"><svg viewBox="0 0 8 8"><path d="M.5 .5 7.500 7.500M7.500 .5 .5 7.500" /></svg></span>
      </div>
    </header>

    <div class="toolbar">
      <svg class="nav" viewBox="0 0 16 16"><path d="M15 8H2M8 1.500 1.500 8 8 14.500" /></svg>
      <svg class="nav dim" viewBox="0 0 16 16"><path d="M1 8H14M8 1.500 14.500 8 8 14.500" /></svg>
      <svg class="nav" viewBox="0 0 16 16"><path d="M13.500 4.500A6.300 6.300 0 1 0 14.300 9" /><path d="M14.500 .5V6.500H8.500Z" fill="#55585c" stroke="none" /></svg>
      <div class="omni">
        <svg class="warn" viewBox="0 0 14 13"><path d="M7 0 14 13H0Z" fill="#d0021b" /><path d="M7 4.500V8.500M7 10V11.500" stroke="#fff" stroke-width="1.400" /></svg>
        <span class="bad" v-fit="89">Не защищено</span>
        <i class="osep"></i>
        <span class="host" v-fit="95">first-project.loc</span><span class="path" v-fit="144">:777/index.php?page=2</span>
        <span class="grow"></span>
        <svg class="tr" viewBox="0 0 14 14"><path d="M0 0H6L7 3H13.500V13.500H7L6.500 11H0Z" fill="#5d6166" /><path d="M7.500 4H12.700V12.700H8L9.500 11 7.500 4Z" fill="#eef1f2" /><path d="M8.500 6H12M10.300 5V6M11.500 6C11.200 8 10 9 9 9.500M9 7 11.500 10" stroke="#5d6166" stroke-width=".8" fill="none" /><path d="M5 4A2 2 0 1 0 5.300 6H3.500" stroke="#eef1f2" fill="none" /></svg>
        <svg class="starb" viewBox="0 0 16 16"><path d="M8 1.600 9.900 6 14.700 6.400 11 9.500 12.200 14.200 8 11.700 3.800 14.200 5 9.500 1.300 6.400 6.100 6Z" fill="none" stroke="#55585c" stroke-width="1.500" /></svg>
      </div>
      <svg class="user" viewBox="0 0 18 18"><circle cx="9" cy="9" r="9" fill="#55585c" /><circle cx="9" cy="6" r="2.800" fill="#fff" /><path d="M3.500 12.500C5 9.800 13 9.800 14.500 12.500 12.500 15.500 5.500 15.500 3.500 12.500Z" fill="#fff" /></svg>
      <svg class="dots" viewBox="0 0 4 14"><circle cx="2" cy="2" r="1.600" /><circle cx="2" cy="7" r="1.600" /><circle cx="2" cy="12" r="1.600" /></svg>
    </div>

    <main class="page">
      <nav class="pills"><a class="on">Home</a><a>Upload</a><a>Gallery</a><a>Registration</a></nav>
      <h3>Upload Page</h3>
      <label>Select boy file for upload:</label>
      <div class="fileinput"><span class="choose"><span v-fit="104">Выберите файл</span></span><span class="none"><span v-fit="107">Файл не выбран</span></span></div>
      <button class="send">Send File</button>
    </main>

    <section class="dialog">
      <div class="title">
        <svg class="dicon" width="15" height="15"><use href="#chrome" /></svg>
        <span v-fit="67">Открытие</span>
        <span class="dclose"><svg viewBox="0 0 8 8"><path d="M.5 .5 7.500 7.500M7.500 .5 .5 7.500" /></svg></span>
      </div>
      <div class="inner">
        <div class="addr">
          <svg class="round" viewBox="0 0 20 20"><circle cx="10" cy="10" r="9" /><path d="M15 10H5.500M9.500 5.500 5 10 9.500 14.500" /></svg>
          <svg class="round r2" viewBox="0 0 20 20"><circle cx="10" cy="10" r="9" /><path d="M5 10H14.500M10.500 5.500 15 10 10.500 14.500" /></svg>
          <svg class="tiny" viewBox="0 0 8 4"><path d="M0 0H8L4 4Z" fill="#d2d2d2" /></svg>
          <svg class="up" viewBox="0 0 10 12"><path d="M5 12V1.500M1 5.500 5 1.200 9 5.500" /></svg>
          <div class="crumb">
            <svg width="17" height="17"><use href="#s-desk" /></svg><span v-fit="76">Рабочий стол</span>
            <svg class="tri" viewBox="0 0 4 8"><path d="M0 0 4 4 0 8Z" fill="#777" /></svg>
            <svg class="chev" viewBox="0 0 8 5"><path d="M.5 .5 4 4 7.500 .5" /></svg>
            <span class="reload"><svg viewBox="0 0 12 12"><path d="M7.500 2.200A4 4 0 1 1 3.500 2.800M6.500 2.200A4 4 0 0 1 10.300 6" fill="none" stroke="#777" stroke-width="1.600" /><path d="M1 1H5.500V5.500Z" fill="#777" /></svg></span>
          </div>
          <div class="search"><span v-fit="117">Поиск: Рабочий стол</span><svg viewBox="0 0 12 12"><circle cx="7.500" cy="4.500" r="3.300" /><path d="M5 7 1 11" /></svg></div>
        </div>
        <div class="cmds">
          <span v-fit="72">Упорядочить</span><svg class="ctri" viewBox="0 0 8 4"><path d="M0 0H8L4 4Z" /></svg>
          <span class="newf" v-fit="78">Создать папку</span>
          <span class="grow"></span>
          <svg class="view" viewBox="0 0 16 16"><rect x=".5" y=".5" width="7" height="6.500" fill="#fff" stroke="#8795a5" /><path d="M2 2h4v3H2z" fill="#3583b5" /><rect x=".5" y="8.500" width="7" height="6.500" fill="#fff" stroke="#8795a5" /><path d="M2 10h2v3H2z" fill="#4a4" /><path d="M4 10h2v3H4z" fill="#d83" /><path d="M9 2.500h6M9 5h4M9 10.500h6M9 13h4" stroke="#49586e" /></svg>
          <svg class="ctri t2" viewBox="0 0 8 4"><path d="M0 0H8L4 4Z" /></svg>
          <svg class="pane" viewBox="0 0 16 15"><rect x=".5" y=".5" width="15" height="14" fill="#fff" stroke="#7b8087" /><path d="M0 2.500h16M5.500 3v12" stroke="#7b8087" /><rect x="9.500" y="3.500" width="6" height="11" fill="#a9d6fb" stroke="#3997ee" /></svg>
          <svg class="help" viewBox="0 0 14 14"><circle cx="7" cy="7" r="6.400" fill="#2b58c8" stroke="#7d8db4" /><text x="4.200" y="10.800" font-family="Open Sans, sans-serif" font-weight="700" font-size="10.500" fill="#fff">?</text></svg>
        </div>
        <div class="body">
          <aside>
            <div v-for="(p, k) in places" :key="k" class="place" :class="{ child: !p.root }">
              <template v-if="!p.gap"><svg width="16" height="16"><use :href="'#' + p.i" /></svg><span v-fit="p.w">{{ p.t }}</span></template>
            </div>
          </aside>
          <div class="list">
            <div v-for="f in files" :key="f.n" class="file" :class="{ hover: f.hover }">
              <svg class="ico" width="48" height="48">
                <use :href="'#' + f.i" width="48" height="48" />
                <text v-for="g in lettering[f.i] || []" :key="g[0]" :x="g[1]" :y="g[2]" :font-size="g[3]" :fill="g[4]" :class="g[5]">{{ g[0] }}</text>
                <use v-if="f.a" href="#shield" x="27" y="24" width="18" height="23" />
                <use v-if="f.s" href="#link" x="1" y="33" width="13" height="13" />
              </svg>
              <div class="meta" :class="{ tall: f.tall }">
                <div class="ln"><span v-fit="f.w">{{ f.n }}</span></div>
                <div v-for="(d, k) in f.d || []" :key="k" class="ln sub"><span v-fit="d[1]">{{ d[0] }}</span></div>
              </div>
            </div>
          </div>
          <div class="scroll">
            <span class="arr"><svg viewBox="0 0 8 5"><path d="M.5 4.500 4 1 7.500 4.500" /></svg></span>
            <span class="thumb"></span><span class="grow"></span>
            <span class="arr"><svg viewBox="0 0 8 5"><path d="M.5 .5 4 4 7.500 .5" /></svg></span>
          </div>
        </div>
        <div class="foot">
          <div class="frow">
            <span class="flabel"><span v-fit="64">Имя файла:</span></span>
            <span class="fname"><svg class="chev" viewBox="0 0 8 5"><path d="M.5 .5 4 4 7.500 .5" /></svg></span>
            <span class="ftype"><span v-fit="60">Все файлы</span><svg class="chev" viewBox="0 0 8 5"><path d="M.5 .5 4 4 7.500 .5" /></svg></span>
          </div>
          <div class="brow"><span class="btn def"><span v-fit="47">Открыть</span></span><span class="btn"><span v-fit="42">Отмена</span></span></div>
          <svg class="grip" viewBox="0 0 9 9"><path d="M6 0h2v2H6zM3 3h2v2H3zM6 3h2v2H6zM0 6h2v2H0zM3 6h2v2H3zM6 6h2v2H6z" fill="#bdbdbd" /></svg>
        </div>
      </div>
    </section>

    <footer class="taskbar">
      <span class="edge"></span>
      <span class="startb"><svg class="ghost" width="28" height="26"><use href="#start" /></svg><svg class="fg" width="28" height="26"><use href="#start" /></svg></span>
      <span class="task t-exp"><svg class="gi" width="30" height="30"><use href="#chrome" /></svg><svg class="fg" width="32" height="30"><use href="#libs" /></svg></span>
      <span class="task t-chr"><svg class="fg" width="32" height="32"><use href="#chrome" /></svg></span>
      <span class="task t-sub"><svg class="gi" width="30" height="30"><use href="#libs" /></svg><svg class="fg" width="36" height="34" viewBox="0 0 36 34"><circle cx="16" cy="18" r="10.500" fill="none" stroke="#e0152b" stroke-width="2.500" /><path d="M20 13.500C17 11 12 12.500 13 15.500 14 18 20 17.500 20 20.500 19 24.500 14 24.500 12 22" fill="none" stroke="#e0152b" stroke-width="2.800" /><circle cx="16" cy="2.500" r="2" fill="#e0152b" /><circle cx="4" cy="27" r="2" fill="#e0152b" /><circle cx="30" cy="26.500" r="3" fill="#e0152b" /></svg></span>
      <span class="task t-vs"><svg class="fg" width="32" height="32" viewBox="0 0 32 32"><path d="M23 0 31 3V28L23 31 0 25 22 25V8L11 17 4 22 2 20V8L4 6 11 13 22 1ZM4 10V18L8 14Z" fill="#0b7bd0" fill-rule="evenodd" /></svg></span>
      <span class="task t-rar"><svg class="gi" width="30" height="30"><use href="#chrome" /></svg><svg class="fg" width="33" height="26" viewBox="0 0 34 26"><path d="M0 2 26 0 33 4V8L6 9 0 6Z" fill="#8d1f5c" /><path d="M0 10 27 8 33 11V16L6 17 0 14Z" fill="#22349c" /><path d="M0 18 27 16 33 19V24L6 26 0 22Z" fill="#17791f" /><path d="M7 6.500H33M7 14.500H33M7 22.500H33" stroke="#d9ccb8" stroke-width="1.300" /><path d="M0 2 6 5V9L0 6ZM0 10 6 13V17L0 14ZM0 18 6 21V26L0 22Z" fill="#2a1420" /><path d="M18 0h4v26h-4z" fill="#6b4a2a" /><rect x="17" y="11" width="6" height="6" fill="none" stroke="#e9d9b0" stroke-width="1.300" /></svg></span>
      <span class="task t-s"><svg class="fg" width="31" height="31" viewBox="0 0 31 31"><path d="M0 0H10V31H0Z" fill="#3c4247" /><path d="M10 0H31V31H10Z" fill="#1d9ad4" /><path d="M5.500 0 7 4 11 4 8 7 9 11 5.500 8.500 2 11 3 7 0 4H4Z" fill="#fff" /><path d="M28 17.500H19C14.500 17.500 14.500 22.500 19 22.500H24C29 22.500 29 27.500 24 27.500H14" fill="none" stroke="#fff" stroke-width="3.200" /></svg></span>
      <span class="wall"></span>
      <svg class="tray" width="105" height="33" viewBox="0 0 105 33">
        <g opacity=".65"><rect x=".7" y="11.700" width="28" height="16" fill="none" stroke="#e9cccc" stroke-width="1.300" /><path d="M3 15.500h23M3 19h23M3 22.500h23" stroke="#e9cccc" stroke-width="2" stroke-dasharray="2.500 1.500" /><path d="M8 25.500h13" stroke="#e9cccc" /></g><path d="M12 16 17 12 22 16Z" fill="#fff" />
        <path d="M35 7V22" stroke="#fff" stroke-width="1.500" /><path d="M36 8C40 6.500 43 10 48 8.500V16C43 18 40 14 36 16Z" fill="#fff" /><circle cx="46" cy="18" r="4.500" fill="#d8202c" /><path d="M44 16 48 20M48 16 44 20" stroke="#fff" stroke-width="1.300" />
        <path d="M64 9H74V17H62V13M68 17V20M64 20.500H72M59 7H64V12H59ZM61.500 12V20" fill="none" stroke="#fff" stroke-width="1.500" />
        <g transform="translate(6 7)" opacity=".3" fill="none" stroke="#fff" stroke-width="1.500"><path d="M64 9H74V17H62V13M68 17V20M64 20.500H72" /><path d="M95 10C97 12 97 16 95 18" /></g>
        <path d="M83 11.500H86L91 7V21L86 16.500H83Z" fill="#fff" /><path d="M93 11C94.500 12.500 94.500 15.500 93 17M95.500 8.500C98.500 11.500 98.500 16.500 95.500 19.500" stroke="#fff" fill="none" stroke-width="1.300" />
      </svg>
      <span class="lang"><span class="gt">ENG</span><span v-fit="23">ENG</span></span>
      <span class="clock"><span class="gt">19:06<br />04.03.2019</span><span v-fit="27">19:06</span><span v-fit="54">04.03.2019</span></span>
    </footer>
  </div>
</template>

<style>
body { margin: 0; overflow: hidden; }
</style>

<style scoped>
* { box-sizing: border-box; }
.screen { position: relative; width: 1920px; height: 1080px; background: #fff; display: flex; flex-direction: column; overflow: hidden; font: 12px/16px "Open Sans", "Noto Sans", sans-serif; color: #000; }
.sprite { position: absolute; }
svg { flex: none; display: block; }
span { white-space: nowrap; }
.grow { flex: 1; }

.tabstrip { height: 34px; flex: none; background: #eaeaea; display: flex; padding-left: 7px; color: #5f6368; }
.tab { width: 240px; height: 34px; display: flex; align-items: center; padding: 0 11px 0 13px; background: #e7e7e7; }
.tab.active { background: #fff; border-radius: 8px 8px 0 0; padding: 0 12px 0 12px; }
.tab.third { width: 237px; padding: 0 10px 0 11px; }
.tab.first { border-radius: 8px 0 8px 0; }
.fav { width: 16px; height: 16px; margin-right: 8px; }
.first .fav { width: 15px; height: 15px; margin-right: 9px; }
.cap { flex: 1; }
.x { width: 9px; height: 9px; stroke: #55585c; stroke-width: 1.700; }
.tabsep { width: 1px; height: 20px; margin-top: 7px; background: #9c9c9c; margin-left: 1px; }
.plus { width: 26px; height: 26px; margin: 4px 0 0 9px; border-radius: 50%; background: #e5e5e5; display: flex; align-items: center; justify-content: center; }
.plus svg { width: 12px; height: 12px; stroke: #45484c; stroke-width: 1.700; }
.wctl { margin-left: auto; display: flex; height: 19px; padding-right: 3px; }
.min { width: 8px; height: 2px; background: #222; margin: 11px 17px 0 0; }
.restore { width: 11px; height: 11px; margin: 4px 8px 0 0; }
.wclose { width: 45px; background: #bcbcbc; display: flex; align-items: center; justify-content: center; }
.wclose svg { width: 8px; height: 8px; stroke: #fff; stroke-width: 1.700; }

.toolbar { height: 37px; flex: none; border-bottom: 1px solid #a7a7a7; display: flex; align-items: center; padding: 0 20px 0 14px; }
.nav { width: 16px; height: 16px; margin-right: 16px; stroke: #55585c; stroke-width: 1.900; fill: none; }
.nav.dim { stroke: #b9bbbd; }
.omni { flex: 1; height: 28px; border-radius: 14px; background: #eef1f2; display: flex; align-items: center; padding: 0 14px 0 11px; font-size: 13.500px; margin-left: -2px; }
.warn { width: 14px; height: 13px; margin-right: 9px; }
.bad { color: #d0021b; }
.osep { width: 1px; height: 16px; background: #909498; margin: 0 9px 0 8px; }
.host { color: #202124; }
.path { color: #6b6f74; }
.tr { width: 14px; height: 14px; margin-right: 17px; }
.starb { width: 16px; height: 16px; margin-right: -4px; }
.user { width: 18px; height: 18px; margin: 0 21px 0 13px; }
.dots { width: 4px; height: 14px; fill: #55585c; }

.page { padding-left: 390px; width: 1530px; font: 14px/20px "Liberation Sans", sans-serif; color: #333; }
.pills { display: flex; gap: 2px; }
.pills a { padding: 10px 15px; color: #337ab7; border-radius: 4px; }
.pills .on { background: #3174af; color: #fff; }
.page h3 { font: 24px/26px "Liberation Sans", sans-serif; margin: 20px 0 10px; }
.page label { display: block; font-weight: 700; margin-bottom: 5px; padding-left: 1px; }
.fileinput { height: 34px; border: 1px solid #bbb; border-radius: 4px; padding: 7px 12px 5px; display: flex; align-items: center; color: #555; box-shadow: inset 0 1px 1px rgba(0, 0, 0, .075); }
.choose { height: 22px; width: 120px; line-height: 20px; text-align: center; border: 1px solid #767676; background: linear-gradient(#f4f4f4, #dcdcdc); color: #000; margin-right: 4px; border-radius: 1px; }
.send { display: block; margin-top: 15px; width: 85px; height: 34px; padding: 0; background: #5cb85c; border: 1px solid #4cae4c; border-radius: 4px; color: #fff; font: 14px "Liberation Sans", sans-serif; }

.dialog { position: absolute; left: 702px; top: 177px; width: 969px; height: 707px; background: #d36060; border: 1px solid #a94d4d; padding: 0 7px 6px 6px; box-shadow: 0 0 5px rgba(0, 0, 0, .12); display: flex; flex-direction: column; }
.title { position: relative; height: 29px; flex: none; display: flex; align-items: center; justify-content: center; font-size: 15px; color: #2c2828; padding: 0 0 2px 1px; }
.dicon { position: absolute; left: 3px; top: 7px; }
.dclose { position: absolute; right: -1px; top: 0; width: 31px; height: 20px; background: #c75050; display: flex; align-items: center; justify-content: center; }
.dclose svg { width: 8px; height: 8px; stroke: #fff; stroke-width: 1.700; }
.inner { flex: 1; border: 1px solid #b24f4f; background: #fff; display: flex; flex-direction: column; min-height: 0; }
.addr { height: 38px; flex: none; display: flex; align-items: center; padding: 0 11px 1px 9px; margin-top: -1px; }
.round { width: 20px; height: 20px; fill: none; stroke: #cdcdcd; stroke-width: 1.300; }
.round path { stroke-width: 2.200; }
.r2 { margin-left: 9px; }
.tiny { width: 8px; height: 4px; margin: 0 14px 0 10px; }
.up { width: 10px; height: 12px; fill: none; stroke: #6c6c6c; stroke-width: 2; margin-right: 8px; }
.crumb { width: 619px; height: 22px; border: 1px solid #d9d9d9; display: flex; align-items: center; padding-left: 2px; }
.crumb > span:not(.reload) { margin-left: 3px; }
.tri { width: 4px; height: 8px; margin-left: 12px; }
.chev { width: 8px; height: 5px; fill: none; stroke: #555; stroke-width: 1.800; margin-left: auto; }
.reload { width: 25px; height: 20px; border-left: 1px solid #d9d9d9; margin-left: 5px; display: flex; align-items: center; justify-content: center; }
.reload svg { width: 12px; height: 12px; transform: scaleX(-1); }
.search { width: 202px; height: 22px; border: 1px solid #d9d9d9; margin-left: 12px; display: flex; align-items: center; justify-content: space-between; padding: 0 8px; color: #6d6d6d; }
.search svg { width: 12px; height: 12px; fill: none; stroke: #6c6c6c; stroke-width: 1.800; }
.cmds { height: 31px; flex: none; background: #f5f6f7; border-bottom: 1px solid #e4e6e8; display: flex; align-items: center; padding: 0 15px 0 18px; color: #1e395b; }
.ctri { width: 8px; height: 4px; fill: #1e395b; margin-left: 6px; }
.newf { margin-left: 30px; }
.view { width: 16px; height: 16px; }
.t2 { margin-left: 10px; }
.pane { width: 16px; height: 15px; margin: 0 21px 0 21px; }
.help { width: 14px; height: 14px; }
.body { height: 524px; flex: none; display: flex; }
aside { width: 157px; border-right: 1px solid #f0f0f0; padding-top: 9px; overflow: hidden; flex: none; }
.place { height: 21px; display: flex; align-items: center; padding-left: 20px; gap: 5px; }
.place.child { padding-left: 30px; }
.list { width: 780px; flex: none; padding: 6px 0 0 16px; display: grid; grid-template-columns: repeat(3, 250px); grid-auto-rows: 52px; gap: 4px; overflow: hidden; align-content: start; }
.file { display: flex; align-items: center; padding-left: 4px; }
.file.hover { background: #e5f3fb; box-shadow: inset 0 0 0 1px #70c0e7; }
.ico .sans { font-family: Roboto, sans-serif; }
.ico .bold { font-family: Roboto, sans-serif; font-weight: 700; }
.ico .open { font-family: "Open Sans", sans-serif; font-weight: 700; }
.ico .serif { font-family: "Liberation Serif", serif; font-weight: 700; }
.ico .deja { font-family: "DejaVu Sans", sans-serif; stroke: #000; stroke-width: .4; }
.meta { margin-left: 5px; }
.meta.tall { height: 48px; }
.ln { height: 16px; }
.sub { color: #6d6d6d; }
.scroll { width: 15px; background: #f0f0f0; display: flex; flex-direction: column; }
.arr { height: 17px; display: flex; align-items: center; justify-content: center; }
.arr svg { width: 8px; height: 5px; fill: none; stroke: #505050; stroke-width: 1.800; }
.thumb { height: 420px; background: #cdcdcd; }
.foot { position: relative; flex: 1; background: #f0f0f0; padding-top: 9px; }
.frow { display: flex; align-items: center; height: 24px; }
.flabel { width: 200px; text-align: right; padding-right: 6px; }
.fname { width: 536px; height: 24px; border: 1px solid #569de5; background: #fff; display: flex; align-items: center; padding-right: 4px; margin-right: 12px; }
.ftype { width: 188px; height: 23px; border: 1px solid #acacac; background: linear-gradient(#f0f0f0, #e5e5e5); display: flex; align-items: center; padding: 0 4px 0 3px; }
.brow { display: flex; gap: 14px; margin: 6px 0 0 749px; }
.btn { width: 86px; height: 24px; line-height: 22px; border: 1px solid #acacac; background: linear-gradient(#f0f0f0, #e5e5e5); text-align: center; }
.btn.def { border-color: #3399ff; }
.grip { position: absolute; right: 1px; bottom: 1px; width: 9px; height: 9px; }

.taskbar { margin-top: auto; height: 40px; flex: none; position: relative; background: linear-gradient(#663838 0 7px, #933a3b 7px, #8c3638); display: flex; color: #fff; }
.edge { width: 9px; background: #ab7a7b; }
.startb { position: relative; width: 28px; margin: 7px 12px 0 3px; fill: #fff; }
.ghost { position: absolute; left: 9px; top: 7px; fill: rgba(255, 255, 255, .3); }
.fg { position: relative; }
.task { position: relative; height: 39px; margin-top: 1px; border: 1px solid rgba(255, 255, 255, .4); background: rgba(255, 255, 255, .16); display: flex; align-items: center; justify-content: center; }
.gi { position: absolute; right: 0; top: 10px; opacity: .28; }
.t-exp { width: 54px; box-shadow: 4px 0 0 -1px #965859, 4px 0 0 0 #b07576; }
.t-chr { width: 58px; margin-left: 8px; border-color: #fff; background: rgba(255, 255, 255, .42); }
.t-sub { width: 58px; margin: 8px 0 0 14px; height: 32px; border-color: rgba(255, 255, 255, .15); background: rgba(255, 255, 255, .05); justify-content: flex-start; padding-left: 1px; }
.t-sub .fg { margin-top: -4px; }
.t-sub .gi { right: 13px; top: 5px; height: 26px; }
.t-vs { width: 54px; margin-left: -6px; box-shadow: 4px 0 0 -1px #965859, 4px 0 0 0 #b07576; }
.t-rar { width: 58px; margin-left: 8px; }
.t-s { width: 58px; margin-left: 4px; box-shadow: 9px 7px 0 -1px #95494a, 9px 7px 0 0 #a96364; }
.t-s .fg, .t-rar .fg { margin-top: -2px; }
.wall { width: 519px; margin: 7px 0 0 527px; clip-path: polygon(0 0, 99% 0, 100% 100%, 2% 100%); background: linear-gradient(90deg, #834640, #8c4c44 12%, #7a3b3c 15%, #7c3c3d 45%, #753a3a 56%, #7c3c3d 68%, #804344 80%, #783b3b 86%, #825051 94%, #82484a); }
.tray { position: absolute; left: 1695px; top: 7px; }
.lang { position: absolute; left: 1807px; top: 13px; font-size: 12px; }
.clock { position: absolute; left: 1840px; top: 4px; width: 68px; display: flex; flex-direction: column; align-items: center; line-height: 17px; }
.gt { position: absolute; left: 6px; top: 6px; opacity: .35; }
.clock .gt { left: 13px; top: 7px; text-align: center; letter-spacing: -.600px; }
</style>
